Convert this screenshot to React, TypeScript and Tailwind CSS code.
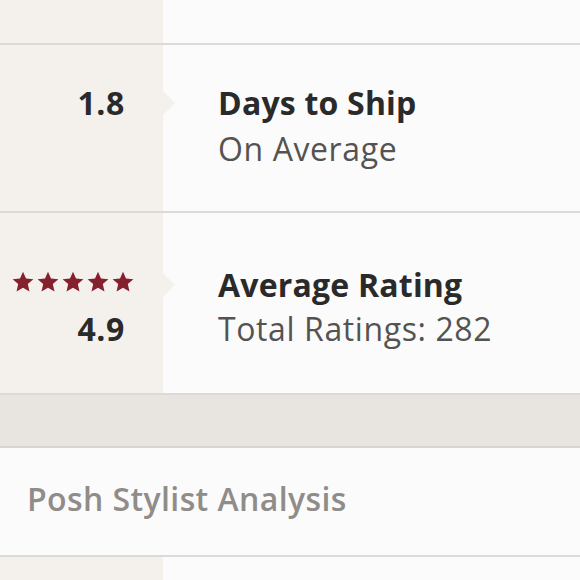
const Star = () => (
  <svg viewBox="0 0 24 24" className="h-[24px] w-[24px]" fill="#85202f">
    <path d="M12 1.8l3 6.6 7.4.8-5.6 4.9 1.7 7.4L12 17.8l-6.5 3.7 1.7-7.4-5.6-4.9 7.4-.8z" />
  </svg>
);

const Pointer = () => (
  <div className="absolute left-full top-1/2 -translate-y-1/2 h-0 w-0 border-y-[12px] border-l-[12px] border-y-transparent border-l-[#f4f1ed]" />
);

const StatRow = ({
  top,
  bottom,
  title,
  sub,
  height,
  lineH,
  shift,
}: {
  top: React.ReactNode;
  bottom?: React.ReactNode;
  title: string;
  sub: string;
  height: string;
  lineH: string;
  shift: string;
}) => (
  <div className={`flex ${height}`}>
    <div className={`w-[163px] shrink-0 bg-[#f4f1ed] flex flex-col justify-center ${shift}`}>
      <div className={`relative flex items-center justify-end pr-[38px] ${lineH}`}>
        {top}
        <Pointer />
      </div>
      <div className={`flex items-center justify-end pr-[38px] ${lineH}`}>{bottom}</div>
    </div>
    <div className={`flex flex-col justify-center pl-[55px] ${shift}`}>
      <div className={`flex items-center text-[32px] font-bold text-[#2a2a2a] ${lineH}`}>{title}</div>
      <div className={`flex items-center text-[32px] tracking-[0.6px] text-[#555352] ${lineH}`}>{sub}</div>
    </div>
  </div>
);

export default function App() {
  return (
    <div className="h-[580px] w-[580px] overflow-hidden bg-[#fbfbfb] font-['Open_Sans',sans-serif] tracking-[0.2px]">
      <div className="flex h-[43px]">
        <div className="w-[163px] bg-[#f4f1ed]" />
      </div>
      <div className="h-[2px] bg-[#dcdad7]" />
      <StatRow
        height="h-[166px]"
        lineH="h-[46px]"
        shift="pb-[4px]"
        top={<div className="text-[32px] font-bold tracking-[0.6px] text-[#2a2a2a]">1.8</div>}
        title="Days to Ship"
        sub="On Average"
      />
      <div className="h-[2px] bg-[#dcdad7]" />
      <StatRow
        height="h-[180px]"
        lineH="h-[44px]"
        shift="pt-[8px]"
        top={
          <div className="flex gap-[1px] mr-[-10px] mt-[-6px]">
            <Star />
            <Star />
            <Star />
            <Star />
            <Star />
          </div>
        }
        bottom={<div className="text-[32px] font-bold tracking-[0.6px] text-[#2a2a2a]">4.9</div>}
        title="Average Rating"
        sub="Total Ratings: 282"
      />
      <div className="h-[2px] bg-[#dcdad7]" />
      <div className="h-[51px] bg-[#e8e5e1]" />
      <div className="h-[2px] bg-[#d8d5d1]" />
      <div className="flex h-[107px] items-center pb-[6px] pl-[27px] text-[32px] font-semibold tracking-[0.4px] text-[#8f8c89]">
        Posh Stylist Analysis
      </div>
      <div className="h-[2px] bg-[#dcdad7]" />
      <div className="flex h-[30px]">
        <div className="w-[163px] bg-[#f4f1ed]" />
      </div>
    </div>
  );
}
